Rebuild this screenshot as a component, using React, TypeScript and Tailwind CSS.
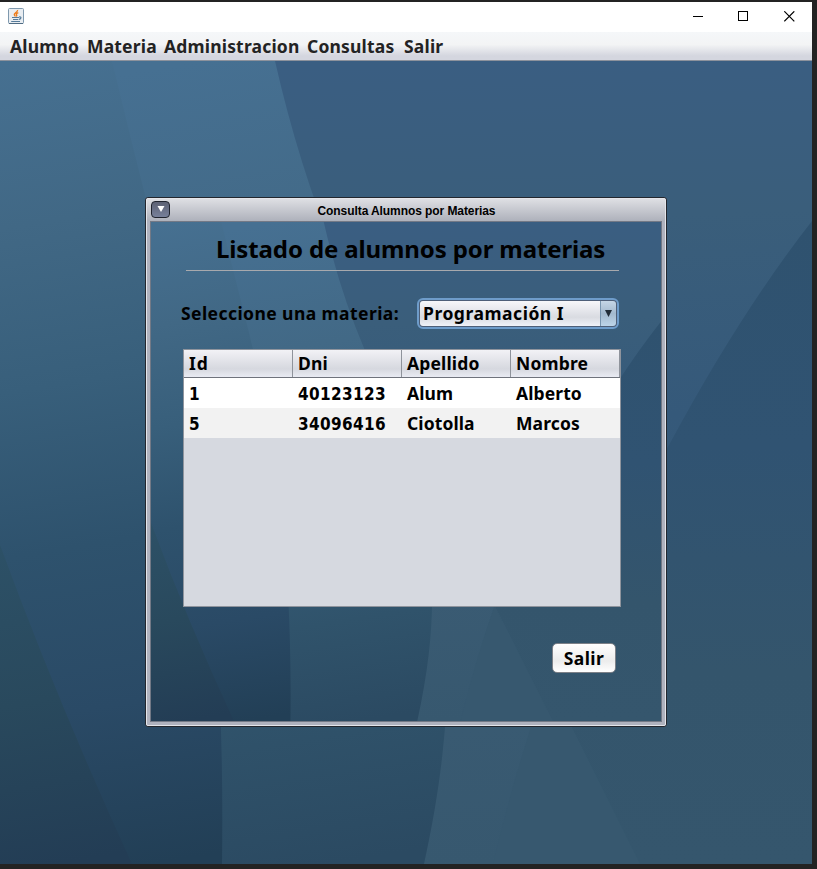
import { useId } from "react";

const menus = [
  { label: "Alumno", width: "w-[77px]" },
  { label: "Materia", width: "w-[77px]" },
  { label: "Administracion", width: "w-[143px]" },
  { label: "Consultas", width: "w-[97px]" },
  { label: "Salir", width: "w-[50px]" },
];

const columns = ["Id", "Dni", "Apellido", "Nombre"];
const rows = [
  ["1", "40123123", "Alum", "Alberto"],
  ["5", "34096416", "Ciotolla", "Marcos"],
];

const font = "font-['Noto_Sans',sans-serif] font-bold";
const digits = "font-['DejaVu_Sans_Condensed','DejaVu_Sans',sans-serif] tracking-[0.35px]";

function Backdrop() {
  const id = useId().replace(/[^a-zA-Z0-9]/g, "");
  return (
    <svg
      className="absolute inset-0 h-full w-full"
      viewBox="0 0 812 803"
      preserveAspectRatio="none"
      aria-hidden="true"
    >
      <defs>
        <linearGradient id={`${id}r`} gradientUnits="userSpaceOnUse" x1="450" y1="0" x2="480" y2="803">
          <stop offset="0" stopColor="#3a5e82" />
          <stop offset="0.2" stopColor="#3a5e7b" />
          <stop offset="0.45" stopColor="#35597a" />
          <stop offset="0.75" stopColor="#3a5b73" />
          <stop offset="1" stopColor="#37586f" />
        </linearGradient>
        <linearGradient id={`${id}d`} gradientUnits="userSpaceOnUse" x1="700" y1="160" x2="690" y2="803">
          <stop offset="0" stopColor="#2f526f" />
          <stop offset="0.35" stopColor="#305372" />
          <stop offset="0.7" stopColor="#34556c" />
          <stop offset="1" stopColor="#35566d" />
        </linearGradient>
        <linearGradient id={`${id}m`} gradientUnits="userSpaceOnUse" x1="200" y1="0" x2="330" y2="803">
          <stop offset="0" stopColor="#467092" />
          <stop offset="0.25" stopColor="#426986" />
          <stop offset="0.5" stopColor="#396180" />
          <stop offset="0.8" stopColor="#30536b" />
          <stop offset="1" stopColor="#2b4a62" />
        </linearGradient>
        <linearGradient id={`${id}l`} gradientUnits="userSpaceOnUse" x1="20" y1="0" x2="150" y2="803">
          <stop offset="0" stopColor="#467091" />
          <stop offset="0.2" stopColor="#416885" />
          <stop offset="0.4" stopColor="#385f7b" />
          <stop offset="0.6" stopColor="#2e526d" />
          <stop offset="0.8" stopColor="#2a4a66" />
          <stop offset="1" stopColor="#223f56" />
        </linearGradient>
        <linearGradient id={`${id}b`} gradientUnits="userSpaceOnUse" x1="0" y1="480" x2="60" y2="803">
          <stop offset="0" stopColor="#2d5167" />
          <stop offset="0.5" stopColor="#29495d" />
          <stop offset="1" stopColor="#233d55" />
        </linearGradient>
      </defs>
      <rect width="812" height="803" fill={`url(#${id}r)`} />
      <path d="M812 160 Q740 252 669 384 Q590 520 547 617 L640 803 H812Z" fill={`url(#${id}d)`} />
      <path d="M547 617 Q515 710 493 803 H640Z" fill="#37586f" />
      <path d="M0 0 H275 Q300 110 340 205 C420 390 484 530 424 803 H0Z" fill={`url(#${id}m)`} />
      <path d="M0 0 H112 Q130 75 146 138 C190 310 226 500 222 803 H0Z" fill={`url(#${id}l)`} />
      <path d="M0 484 Q58 642 132 803 H0Z" fill={`url(#${id}b)`} />
    </svg>
  );
}

function JavaIcon() {
  return (
    <svg className="size-4" viewBox="0 0 16 16" fill="none" aria-hidden="true">
      <rect x="0.5" y="0.5" width="15" height="15" rx="1" fill="#e9edf1" stroke="#7f99ae" />
      <path d="M1 15.5H15" stroke="#4f6c84" />
      <path
        d="M9.6 2C10 4 6 4.8 6.3 6.6C6.4 7.3 7.2 7.8 7.3 8.5M10.3 4.6C8 5.5 8 6.3 8.7 7.2C9 7.7 8.6 8.2 8.3 8.5"
        stroke="#ee7d1c"
        strokeWidth="1.4"
      />
      <path d="M4 9.5H11M5 11.5H10.3M3.2 13.5H12" stroke="#557b9a" strokeWidth="1.2" />
      <path d="M11 9C13.6 8.3 13.6 11 11 11.3" stroke="#557b9a" strokeWidth="1.2" />
    </svg>
  );
}

function MainTitleBar() {
  return (
    <div className="flex h-[30px] items-start justify-between bg-white pt-1.5 pr-[17px] pl-2">
      <JavaIcon />
      <div className="flex gap-[35px] pt-[3px]">
        <svg className="h-[11px] w-[11px]" viewBox="0 0 11 11">
          <path d="M1 5.5H11" stroke="#000" />
        </svg>
        <svg className="h-[11px] w-[11px]" viewBox="0 0 11 11" fill="none">
          <rect x="0.5" y="0.5" width="9" height="9" stroke="#000" />
        </svg>
        <svg className="h-[11px] w-[11px]" viewBox="0 0 11 11">
          <path d="M0.3 0.3L10.3 10.3M10.3 0.3L0.3 10.3" stroke="#000" strokeWidth="1.2" />
        </svg>
      </div>
    </div>
  );
}

function MenuBar() {
  return (
    <nav
      className={`flex h-[29px] items-center border-b border-[#8d929c] bg-linear-to-b from-[#f5f7f9] via-[#f3f4f5] via-45% to-[#d4d6df] to-85% pl-2.5 text-[17.5px] tracking-[0.18px] text-[#232323] ${font}`}
    >
      {menus.map((m) => (
        <span key={m.label} className={`whitespace-nowrap ${m.width}`}>
          {m.label}
        </span>
      ))}
    </nav>
  );
}

function StudentTable() {
  return (
    <div className="ml-[32px] h-[258px] w-[438px] border border-[#8f949d] bg-[#d6d9e0] text-[17.5px] text-black">
      <div className="grid h-7 grid-cols-4 border-b border-[#6f737c] bg-linear-to-b from-[#f2f2f6] via-[#d6d8df] via-70% to-[#e9ebf3]">
        {columns.map((c) => (
          <div
            key={c}
            className="flex items-center border-r border-[#8f939b] pl-[5px] tracking-[0.15px] first:tracking-[1px]"
          >
            {c}
          </div>
        ))}
      </div>
      {rows.map((r) => (
        <div key={r[0]} className="grid h-[30px] grid-cols-4 bg-white last:bg-[#f2f2f2]">
          {r.map((v, i) => (
            <div
              key={v}
              className={`flex items-center pl-[5px] ${i < 2 ? `pt-[3px] text-[17px] ${digits}` : "pt-px tracking-[0.1px]"}`}
            >
              {v}
            </div>
          ))}
        </div>
      ))}
    </div>
  );
}

function InternalWindow() {
  return (
    <section className="absolute top-[136px] left-[145px] flex h-[530px] w-[522px] flex-col rounded-[3px] border border-[#23272e] bg-[#afb2be]">
      <div className="flex grow flex-col rounded-[2px] border border-[#e4e5ea]">
        <header className="flex h-[22px] shrink-0 items-center bg-linear-to-b from-[#dedfe3] to-[#aeb1bb] pl-1">
          <button className="mb-0.5 flex h-[17px] w-[19px] items-center justify-center rounded-[4px] border border-[#20242e] bg-linear-to-b from-[#5d6274] to-[#77809a]">
            <svg className="h-[6px] w-[8px]" viewBox="0 0 8 6">
              <path d="M0.5 0H7.5L4 6Z" fill="#fff" />
            </svg>
          </button>
          <h1 className="grow pt-0.5 pr-[22px] text-center font-['Liberation_Sans',Arial,sans-serif] text-xs font-bold tracking-[-0.08px] text-black">
            Consulta Alumnos por Materias
          </h1>
        </header>
        <div className="mx-[3px] mb-[3px] grow border border-[#737986]">
          <main className={`relative h-full overflow-hidden text-black ${font}`}>
            <Backdrop />
            <div className="relative flex flex-col">
              <h2 className="ml-[35px] h-[49px] w-[433px] border-b border-[#a8a9ad] pt-[9px] pl-[30px] text-[24px] leading-9 tracking-[-0.12px] whitespace-nowrap">
                Listado de alumnos por materias
              </h2>
              <div className="mt-[27px] flex h-[31px] items-center pl-[30px]">
                <label className="w-[236px] text-[17.5px] tracking-[0.43px] whitespace-nowrap">
                  Seleccione una materia:
                </label>
                <div className="flex h-[31px] w-[202px] rounded-[6px] border-2 border-[#6e9cca] bg-[#4e5f78] p-px">
                  <div className="flex grow items-center rounded-l-[3px] bg-linear-to-b from-[#f7f7fa] via-[#d9dbe1] via-65% to-[#f0f2f8] pl-[3px] text-[17.5px] tracking-[0.53px]">
                    Programación I
                  </div>
                  <div className="flex w-4 items-center justify-center rounded-r-[3px] border-l border-[#7895af] bg-linear-to-b from-[#c5d6e6] via-[#a3b9ce] to-[#bdd5e9]">
                    <svg className="h-[7px] w-[7px]" viewBox="0 0 7 7">
                      <path d="M0 0H7L3.5 7Z" fill="#222d38" />
                    </svg>
                  </div>
                </div>
              </div>
              <div className="mt-[20px]">
                <StudentTable />
              </div>
              <button className="mt-[36px] ml-[401px] h-[30px] w-[64px] rounded-[5px] border border-[#7d8188] bg-linear-to-b from-white via-[#ececec] via-60% to-white text-[17.5px] tracking-[0.4px]">
                Salir
              </button>
            </div>
          </main>
        </div>
      </div>
    </section>
  );
}

export default function App() {
  return (
    <div className="h-[869px] w-[817px] overflow-hidden bg-[#232323] pt-0.5">
      <div className="flex h-[862px] w-[812px] flex-col">
        <MainTitleBar />
        <MenuBar />
        <div className="relative grow">
          <Backdrop />
          <InternalWindow />
        </div>
      </div>
    </div>
  );
}
